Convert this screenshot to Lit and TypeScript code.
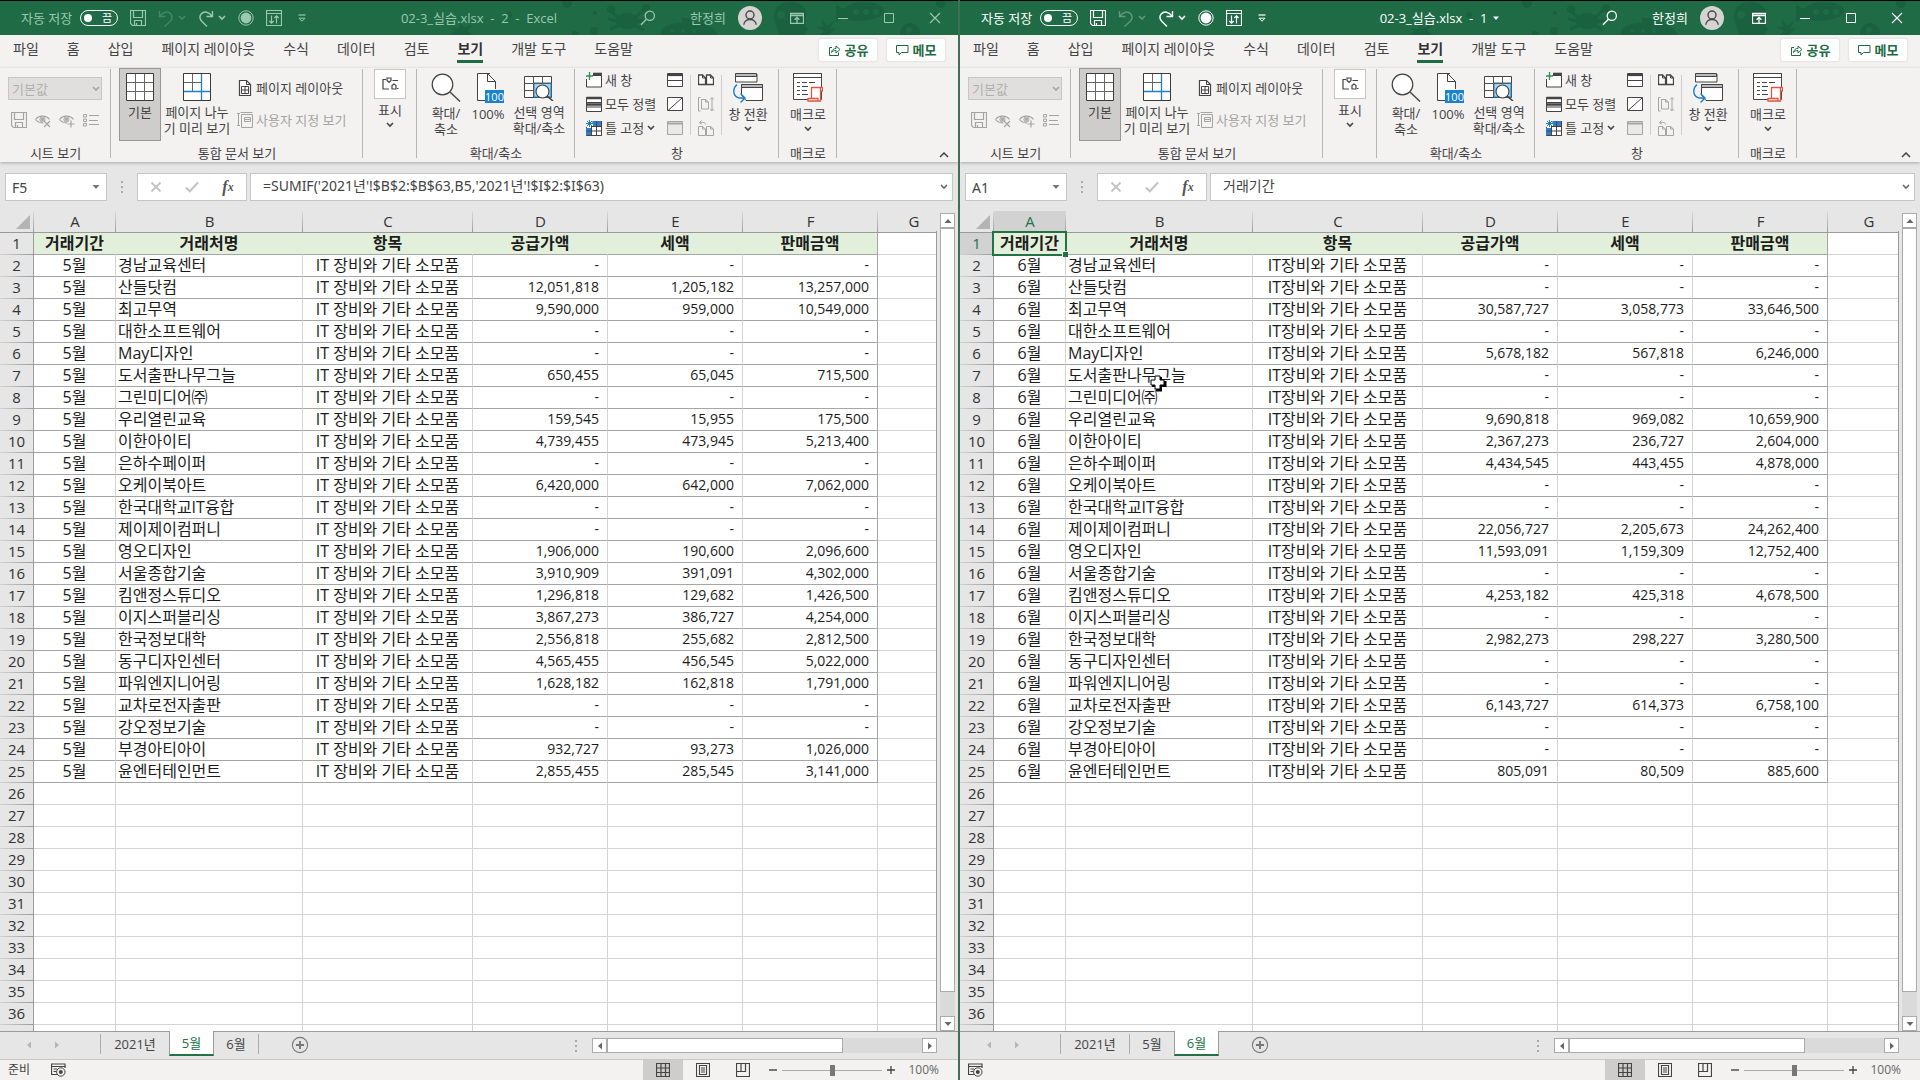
import { LitElement, html, svg, css, nothing } from "lit";
import { customElement, property } from "lit/decorators.js";
import { classMap } from "lit/directives/class-map.js";

interface Book {
  id: string;
  title: string;
  active: boolean;
  cell: string;
  formula: string;
  month: string;
  item: string;
  sheet: string;
  status: string;
  periodWidth: number;
  rows: string[][];
}

const CLIENTS = [
  "경남교육센터", "산들닷컴", "최고무역", "대한소프트웨어", "May디자인", "도서출판나무그늘",
  "그린미디어㈜", "우리열린교육", "이한아이티", "은하수페이퍼", "오케이북아트", "한국대학교IT융합",
  "제이제이컴퍼니", "영오디자인", "서울종합기술", "킴앤정스튜디오", "이지스퍼블리싱", "한국정보대학",
  "동구디자인센터", "파워엔지니어링", "교차로전자출판", "강오정보기술", "부경아티아이", "윤엔터테인먼트",
];

const NONE = ["-", "-", "-"];

const MAY: string[][] = [
  NONE,
  ["12,051,818", "1,205,182", "13,257,000"],
  ["9,590,000", "959,000", "10,549,000"],
  NONE,
  NONE,
  ["650,455", "65,045", "715,500"],
  NONE,
  ["159,545", "15,955", "175,500"],
  ["4,739,455", "473,945", "5,213,400"],
  NONE,
  ["6,420,000", "642,000", "7,062,000"],
  NONE,
  NONE,
  ["1,906,000", "190,600", "2,096,600"],
  ["3,910,909", "391,091", "4,302,000"],
  ["1,296,818", "129,682", "1,426,500"],
  ["3,867,273", "386,727", "4,254,000"],
  ["2,556,818", "255,682", "2,812,500"],
  ["4,565,455", "456,545", "5,022,000"],
  ["1,628,182", "162,818", "1,791,000"],
  NONE,
  NONE,
  ["932,727", "93,273", "1,026,000"],
  ["2,855,455", "285,545", "3,141,000"],
];

const JUNE: string[][] = [
  NONE,
  NONE,
  ["30,587,727", "3,058,773", "33,646,500"],
  NONE,
  ["5,678,182", "567,818", "6,246,000"],
  NONE,
  NONE,
  ["9,690,818", "969,082", "10,659,900"],
  ["2,367,273", "236,727", "2,604,000"],
  ["4,434,545", "443,455", "4,878,000"],
  NONE,
  NONE,
  ["22,056,727", "2,205,673", "24,262,400"],
  ["11,593,091", "1,159,309", "12,752,400"],
  NONE,
  ["4,253,182", "425,318", "4,678,500"],
  NONE,
  ["2,982,273", "298,227", "3,280,500"],
  NONE,
  NONE,
  ["6,143,727", "614,373", "6,758,100"],
  NONE,
  NONE,
  ["805,091", "80,509", "885,600"],
];

const BOOKS: Book[] = [
  {
    id: "may", title: "02-3_실습.xlsx \u00a0-\u00a0 2 \u00a0-\u00a0 Excel", active: false, cell: "F5",
    formula: "=SUMIF('2021년'!$B$2:$B$63,B5,'2021년'!$I$2:$I$63)", month: "5월",
    item: "IT 장비와 기타 소모품", sheet: "5월", status: "준비", periodWidth: 82, rows: MAY,
  },
  {
    id: "june", title: "02-3_실습.xlsx \u00a0-\u00a0 1", active: true, cell: "A1",
    formula: "거래기간", month: "6월",
    item: "IT장비와 기타 소모품", sheet: "6월", status: "", periodWidth: 72, rows: JUNE,
  },
];

const TABS = ["파일", "홈", "삽입", "페이지 레이아웃", "수식", "데이터", "검토", "보기", "개발 도구", "도움말"];
const HEADERS = ["거래기간", "거래처명", "항목", "공급가액", "세액", "판매금액"];
const LETTERS = ["A", "B", "C", "D", "E", "F", "G"];
const SHEETS = ["2021년", "5월", "6월"];

const icon = (w: number, h: number, body: unknown) => html`
  <svg width=${w} height=${h} viewBox="0 0 ${w} ${h}" fill="none" stroke="currentColor" stroke-width="1" aria-hidden="true">${body}</svg>`;

const chevron = () => icon(8, 6, svg`<path d="M1 1 L4 4 L7 1" stroke-width="1.6"/>`);
const saveIcon = () => icon(16, 16, svg`<path d="M.5 .5H15.5V15.5H2.5L.5 13.5Z M3.5 .5V7.5H12.5V.5 M4.5 15.5V10.5H11.5V15.5 M6.5 13V15.5" stroke-width="1.2"/>`);
const undoIcon = () => icon(16, 17, svg`<path d="M1.5 1V6.5H7.5 M1.8 6.3C5 1.5 10 1 12.6 3.8C15 6.6 14 9.5 12 11.5L6.5 16.5" stroke-width="1.4"/>`);
const redoIcon = () => icon(16, 17, svg`<path d="M14.5 1V6.5H8.5 M14.2 6.3C11 1.5 6 1 3.4 3.8C1 6.6 2 9.5 4 11.5L9 16.5" stroke-width="1.4"/>`);
const recordIcon = () => icon(16, 16, svg`<circle cx="8" cy="8" r="7.2"/><circle cx="8" cy="8" r="5.4" fill="currentColor" stroke="none"/>`);
const sortIcon = () => icon(16, 16, svg`<path d="M.5 .5H15.5V15.5H.5Z M.5 3.5H15.5 M5.5 5.5V13 M3.3 11L5.5 13.2L7.7 11 M10.5 13.5V6 M8.3 8L10.5 5.8L12.7 8" stroke-width="1.2"/>`);
const moreIcon = () => icon(16, 10, svg`<path d="M4.500 2H11.500" stroke-width="1.2"/><path d="M5 5.2H11L8 8.2Z"/>`);
const searchIcon = () => icon(16, 16, svg`<circle cx="9.8" cy="5.8" r="4.6" stroke-width="1.3"/><path d="M6.4 9.2L1 14.8" stroke-width="1.4"/>`);
const avatar = () => icon(24, 24, svg`<circle cx="12" cy="12" r="12" fill="#d6d4d3" stroke="none"/><circle cx="12" cy="9" r="4" stroke="#494949" stroke-width="1.4"/><path d="M5.8 18.8C6.4 11.8 17.6 11.8 18.2 18.8" stroke="#494949" stroke-width="1.4"/>`);
const displayIcon = () => icon(14, 12, svg`<path d="M.5 1.5H13.5V11.5H.5Z M.5 3.5H13.5 M7 11.5V5.5 M4.6 7.8L7 5.4L9.4 7.8" stroke-width="1.3"/>`);
const minIcon = () => icon(10, 10, svg`<path d="M0 5.5H10"/>`);
const maxIcon = () => icon(10, 10, svg`<path d="M.5 .5H9.5V9.5H.5Z"/>`);
const closeIcon = () => icon(12, 12, svg`<path d="M1 1L11 11M11 1L1 11" stroke-width="1.1"/>`);
const shareIcon = () => icon(13, 13, svg`<path d="M4 3.5H1.5V11.5H10.5V8.5 M3.5 8.5C4 5.5 6 4.5 8 4.5V2L12 5.5L8 9V6.5C6 6.5 4.5 7 3.5 8.5Z"/>`);
const noteIcon = () => icon(13, 12, svg`<path d="M.5 1.5H12V8.5H5.5L3 11V8.5H.5Z"/>`);

const eye = svg`<path d="M.5 7.5C3.5 3 11.5 3 14.5 7.5 M.5 7.5C2.5 10 5 11 8 10.8" stroke-width="1.2"/><circle cx="7.5" cy="7.5" r="2.6"/><circle cx="7.5" cy="7.5" r="1.2" fill="currentColor"/>`;
const eyeX = () => icon(16, 16, svg`${eye}<path d="M9 9L15 15M15 9L9 15" stroke-width="1.2"/>`);
const eyePlus = () => icon(16, 16, svg`${eye}<path d="M12 8.5V15.5M8.5 12H15.5" stroke-width="1.2"/>`);
const listIcon = () => icon(16, 14, svg`<path d="M.5 1.5H3.5V4H.5Z M.5 6H3.5V8.5H.5Z M.5 10.5H3.5V13H.5Z M6 2.5H16 M6 7.5H15 M6 11.5H16"/>`);

const normalIcon = () => icon(28, 28, svg`<path d="M1 1H27V27H1Z" fill="#fff" stroke="none"/><path d="M9.5 1V27M18.5 1V27M1 9.5H27M1 18.5H27" stroke="#666"/><path d="M.5 .5H27.5V27.5H.5Z" stroke="#3b3b3b"/>`);
const breakIcon = () => icon(28, 28, svg`<path d="M1 1H27V27H1Z" fill="#fff" stroke="none"/><path d="M9.5 1V18M1 9.5H18" stroke="#666"/><path d="M.5 .5H27.5V27.5H.5Z" stroke="#3b3b3b"/><path d="M18.5 1V27M1 18.5H27" stroke="#1e7fc8" stroke-width="1.3"/>`);
const layoutIcon = () => icon(16, 18, svg`<path d="M2.5 1.5H9.5L13.5 5.5V16.5H2.5Z" fill="#fff" stroke-width="1.2"/><path d="M9.5 1.5V5.5H13.5 M4.5 7.5H11.5V14.5H4.5Z M8 7.5V14.5 M4.5 11H11.5"/>`);
const customIcon = () => icon(16, 18, svg`<path d="M0 2.5H3M0 14.5H3M1.5 2.5V14.5 M3.5 1.5H15.5 M4.5 3.5H15.5V16.5H4.5Z M7.5 6.5H13.5V10.5H7.5Z M7.5 8.5H13.5"/>`);
const showIcon = () => icon(18, 14, svg`<path d="M5 2.5H2V12H8" stroke-width="1.2"/><path d="M6 1H10V3.5L8 5.5L6 3.5Z M11.5 3.5H17 M11 8.5L13 7L15 8.5V12H11Z M16 11.5H17.5" stroke-width="1.2"/>`);
const zoomIcon = () => icon(30, 29, svg`<circle cx="11.5" cy="11.5" r="10.3" fill="#fff" stroke-width="1.2"/><path d="M19 19L29 28.5" stroke-width="1.4"/>`);
const hundredIcon = () => icon(34, 30, svg`<path d="M6.5 .5H16.5L24.5 8.5V27.5H6.5Z" fill="#fff" stroke="none"/><path d="M19 .5H6.5V27.5H15 M16.5 .5V8.5H24.5V16 M16.5 .5L24.5 8.5"/><path d="M14 17H33V30H14Z" fill="#1a82cf" stroke="none"/><text class="badge" x="23.5" y="27.5" text-anchor="middle">100</text>`);
const areaIcon = () => icon(30, 28, svg`<path d="M.5 3.5H27.5V24.5H.5Z" fill="#fff"/><path d="M10 10H27V24H10Z" fill="#a9d3f5" stroke="#1a82cf"/><path d="M9.5 3.5V24.5M18.5 3.5V10M1 10.5H27M1 17.5H10" stroke="#555"/><circle cx="18.5" cy="18.5" r="6.5" fill="#fff" stroke-width="1.2"/><path d="M23.2 23.2L29 28" stroke-width="1.5"/>`);
const newWinIcon = () => icon(16, 16, svg`<path d="M6 3.5H15.5V15H.5V7" fill="#fff"/><path d="M7 2H16" stroke-width="2.6"/><path d="M3.5 0V8M0 4H7" stroke="#2f8f55" stroke-width="1.3"/>`);
const arrangeIcon = () => icon(16, 16, svg`<path d="M.5 1.5H15.5V15.5H.5Z" fill="#fff"/><path d="M.5 2H15.5M.5 8.5H15.5" stroke-width="2.4"/><path d="M.5 6.5H15.5M.5 11H15.5"/>`);
const freezeIcon = () => icon(16, 16, svg`<path d="M6 2H15.5V15.5H.5V7" fill="#fff"/><path d="M7 1H16V6H7Z M0 8H5V16H0Z" fill="#2f80c5" stroke="none"/><path d="M5.500 7V15.5M10.5 1V15.5M5 6.5H15.5M.5 11H15.5M.5 15.5H15.5V1"/><path d="M3.5 0V7M0 3.5H7M1 1L6 6M6 1L1 6" stroke="#1e7fc8"/>`);
const splitIcon = () => icon(16, 15, svg`<path d="M.5 .5H15.5V13.5H.5Z" fill="#fff"/><path d="M.5 2H15.5" stroke-width="2.2"/><path d="M.5 7.5H15.5"/>`);
const hideIcon = () => icon(16, 15, svg`<path d="M.5 .5H15.5V13.5H.5Z" fill="#fff"/><path d="M1 13.5L15.5 .5"/>`);
const unhideIcon = () => icon(16, 15, svg`<path d="M.5 .5H15.5V13.5H.5Z" fill="#e9e9e9"/><path d="M.5 2.5H15.5" stroke-width="2"/>`);
const sideIcon = () => icon(16, 14, svg`<path d="M.5 2H4.5L7.5 5V11.5H.5Z M8.5 2H12.5L15.5 5V11.5H8.5Z" fill="#fff" stroke-width="1.3"/><path d="M4.5 2V5H7.5M12.5 2V5H15.5"/>`);
const syncIcon = () => icon(16, 15, svg`<path d="M2.5 .5H.5V14H2.5 M3.5 2.5H7.5L10.5 5V12H3.5Z M7.5 2.5V5H10.5 M14 .5V14 M12.2 2.5L14 .7L15.8 2.5 M12.2 12L14 13.8L15.8 12"/>`);
const resetIcon = () => icon(16, 16, svg`<path d="M.5 6.5H4.5L7.5 9V15.5H.5Z M8.5 6.5H12.5L15.5 9V15.5H8.5Z M4.5 6.5V9H7.5M12.5 6.5V9H15.5 M7.5 4.5C7.5 2.5 5 2 1.5 2.5 M3.5 .5L1.3 2.6L3.8 4.2"/>`);
const switchIcon = () => icon(30, 30, svg`<path d="M2.5 1V9H24V1" fill="#fff"/><path d="M2.5 .5H23.5V3.5H2.5Z" fill="#b9b9b9"/><path d="M8.5 11.5H29.5V27.5H13L8.5 22Z" fill="#fff"/><path d="M8.5 11.5H29.5V14.5H8.5Z" fill="#b9b9b9"/><path d="M4 11.5C-1 16 0 23.5 6 25H11.5 M7.5 20.5L12 25L7.5 29.5" stroke="#1e7fc8" stroke-width="1.4"/>`);
const macroIcon = () => icon(30, 30, svg`<path d="M.5 .5H28.5V26.5H.5Z" fill="#fff"/><path d="M.5 .5H28.5V4.5H.5Z"/><path d="M4 9.5H7M9 9.5H14M16 9.5H22M4 13.5H7M9 13.5H15M4 17.5H7M9 17.5H14M4 21.5H7M9 21.5H15"/><path d="M18.5 14.5H29C30 14.5 30 18 29 18H27.5V28H15V25.5H18.5Z M27.5 14.5V18 M15 25.5H25V28" fill="#fff" stroke="#e8523f" stroke-width="1.3"/>`);
const macroStatus = () => icon(15, 14, svg`<path d="M7 11.5H.5V1H14V5 M.5 3.5H14 M2.5 6H6M2.5 8.5H5" stroke-width="1.2"/><circle cx="9.8" cy="9" r="4.2"/><circle cx="9.8" cy="9" r="2" fill="currentColor" stroke="none"/>`);
const triangle = (points: string) => html`<svg width="8" height="8" viewBox="0 0 8 8" aria-hidden="true"><polygon points=${points} fill="currentColor" /></svg>`;
const UP = "0.5,6 4,2 7.5,6";
const DOWN = "0.5,2 7.5,2 4,6";
const LEFT = "6,0.5 6,7.5 2,4";
const RIGHT = "2,0.5 6,4 2,7.5";

@customElement("excel-window")
export class ExcelWindow extends LitElement {
  @property({ attribute: false }) book!: Book;

  static styles = css`
    :host {
      display: flex;
      flex-direction: column;
      min-width: 0;
      height: 100%;
      background: #e6e6e6;
      color: #444;
      font: 13px/16px "Open Sans", "Noto Sans CJK KR", sans-serif;
      overflow: hidden;
    }
    * { box-sizing: border-box; }
    button, input, select { font: inherit; color: inherit; margin: 0; border-radius: 0; }
    button { display: flex; align-items: center; justify-content: center; padding: 0; border: 0; background: none; }
    svg { display: block; flex: none; }

    .title { position: relative; display: grid; grid-template-columns: 1fr auto 1fr; align-items: center; height: 35px; border-top: 1px solid #000; background: #1e6b45; color: #9cc8b0; }
    .title.on { color: #fff; }
    .art { position: absolute; left: 0; top: 0; color: #1a6140; }
    .quick, .account { position: relative; display: flex; align-items: center; }
    .quick { gap: 12px; padding-left: 21px; }
    .auto { display: flex; align-items: center; gap: 8px; }
    .toggle { width: 38px; height: 16px; justify-content: space-between; padding: 0 5px 0 3px; border: 1px solid #fff; border-radius: 8px; color: #fff; font-size: 11px; line-height: 14px; }
    .knob { width: 8px; height: 8px; border-radius: 50%; background: #fff; }
    .split { gap: 4px; }
    .dim { opacity: .3; }
    .name { position: relative; display: flex; align-items: center; gap: 5px; white-space: pre; }
    .account { justify-content: flex-end; }
    .user { gap: 12px; margin: 0 12px 0 34px; color: inherit; }
    .frame { width: 46px; height: 34px; }

    .tabs { display: flex; height: 33px; padding: 0 13px; background: #f3f2f1; }
    .tablist { display: flex; align-self: flex-start; gap: 28px; font-size: 14px; line-height: 20px; }
    .tablist a { padding: 4px 0 1px; border-bottom: 3px solid transparent; color: #444; text-decoration: none; }
    .tablist a.on { border-color: #1e6b45; font-weight: 700; color: #333; }
    .share { display: flex; gap: 10px; margin: 4px 0 0 auto; }
    .share button { gap: 4px; width: 58px; height: 22px; border-radius: 2px; background: #fff; box-shadow: 0 0 2px #c4c4c4; color: #1e6b45; font-weight: 700; }

    .ribbon { position: relative; display: flex; height: 94px; background: #f3f2f1; box-shadow: 0 1px 3px #a9a9a9; }
    .group { display: flex; flex-direction: column; background: linear-gradient(#b8b6b4, #b8b6b4) right top 1px / 1px 89px no-repeat; }
    .body { display: flex; height: 76px; }
    .label { line-height: 18px; text-align: center; }
    .g-sheet { width: 111px; }
    .g-book { width: 252px; }
    .g-show { width: 54px; }
    .g-zoom { width: 158px; }
    .g-window { width: 204px; }
    .g-macro { width: 58px; }
    .g-sheet .body { flex-direction: column; gap: 12px; padding: 9px 9px 0 8px; color: #a6a4a2; }
    .g-book .body { gap: 1px; padding-left: 8px; }
    .g-show .body, .g-macro .body { justify-content: center; }
    .g-zoom .body { gap: 4px; padding-left: 10px; }
    .g-window .body { gap: 7px; padding-left: 11px; }
    .combo { display: grid; height: 23px; align-items: center; }
    .combo > * { grid-area: 1 / 1; }
    .combo select { width: 100%; height: 23px; padding: 0 3px; appearance: none; border: 1px solid #c8c6c4; background: #e1dfdd; color: #b1afad; opacity: 1; }
    .combo svg { justify-self: end; margin-right: 2px; }
    .minis { display: flex; align-items: center; gap: 8px; padding-left: 3px; }
    .big { flex-direction: column; justify-content: flex-start; gap: 3px; height: 73px; padding-top: 4px; border: 1px solid transparent; text-align: center; }
    .big span { white-space: pre; }
    .big .drop { display: flex; height: 8px; align-items: center; }
    .w42 { width: 42px; }
    .w38 { width: 38px; }
    .w56 { width: 56px; }
    .w70 { width: 70px; }
    .pressed { border-color: #979593; background: #cfcdcb; }
    .pair { display: flex; flex-direction: column; gap: 8px; padding: 8px 0 0 4px; }
    .small { justify-content: flex-start; gap: 3px; height: 24px; white-space: nowrap; }
    .off { color: #a6a4a2; }
    .show { padding-top: 0; }
    .tile { display: flex; align-items: center; justify-content: center; width: 32px; height: 30px; border: 1px solid #c8c6c4; background: #fff; }
    .col { display: flex; flex-direction: column; }
    .col.wide { width: 74px; }
    .bar { width: 1px; height: 60px; margin-top: 7px; background: #d0cecc; }
    .badge { fill: #fff; stroke: none; font: 11px "Open Sans", sans-serif; }
    .fold { align-self: flex-end; width: 28px; height: 14px; margin-left: auto; }

    .entry { display: flex; height: 49px; padding: 11px 5px 10px; font: 14px/16px "Noto Sans", "Noto Sans CJK KR", sans-serif; }
    .cellbox { display: flex; width: 102px; align-items: center; border: 1px solid #c6c6c6; background: #fff; }
    .cellbox input { flex: 1; min-width: 0; height: 26px; padding: 0 6px; border: 0; background: none; }
    .cellbox button { width: 20px; height: 26px; color: #777; }
    .dots { display: flex; flex-direction: column; align-items: center; justify-content: center; gap: 3px; width: 30px; }
    .dots i { width: 2px; height: 2px; background: #a9a9a9; }
    .acts { display: flex; width: 110px; margin-right: 3px; border: 1px solid #c6c6c6; background: #fff; color: #c2c2c2; }
    .acts button { flex: 1; }
    .fx { color: #555; font: italic 700 16px/20px "Liberation Serif", serif; }
    .fx small { font-size: 12px; }
    .formula { display: flex; flex: 1; min-width: 0; border: 1px solid #c6c6c6; background: #fff; }
    .formula input { flex: 1; min-width: 0; padding: 0 12px 2px; border: 0; background: none; }
    .formula button { width: 16px; color: #666; }

    .work { display: flex; flex: 1 1 0; min-height: 0; }
    .sheet { flex: 1; min-width: 0; overflow: hidden; border-right: 1px solid; border-image: linear-gradient(#e6e6e6 21px, #9b9b9b 21px) 1; background: #fff; }
    table { width: 100%; min-width: 950px; table-layout: fixed; border-collapse: separate; border-spacing: 0; color: #1c1c1c; font-size: 16px; line-height: 21px; }
    col.no { width: 34px; }
    col.client { width: 187px; }
    col.item { width: 170px; }
    col.sum { width: 135px; }
    th, td { height: 22px; padding: 0; border-right: 1px solid #d4d4d4; border-bottom: 1px solid #d4d4d4; font-weight: 400; white-space: nowrap; text-align: center; }
    thead th { border-right: 0; border-bottom-color: #9b9b9b; background: linear-gradient(#dcdcdc, #9b9b9b) right / 1px 100% no-repeat #e6e6e6; color: #333; font-size: 15px; }
    tbody th { padding-bottom: 2px; border-right-color: #9b9b9b; border-bottom: 0; background: linear-gradient(90deg, #d2d2d2, #9b9b9b) bottom / 100% 1px no-repeat #e6e6e6; color: #333; font-size: 15px; line-height: 20px; }
    th.sel { background-color: #d2d2d2; color: #217346; }
    .corner svg { margin-left: 16px; }
    .data td { border-bottom-color: #a6a6a6; }
    .data td.f { border-right-color: #a6a6a6; }
    .data td.g { border-bottom-color: #d4d4d4; }
    .head td { border-right-color: #e2efda; background: #e2efda; font-weight: 700; }
    .head td.g { border-right-color: #d4d4d4; background: #fff; }
    td.b { padding-left: 2px; text-align: left; }
    .head td.b { padding: 0; text-align: center; }
    .data td.num { padding: 0 8px 2px 0; text-align: right; font-size: 14px; line-height: 19px; }
    td.pick { position: relative; }
    .ring { position: absolute; inset: -2px; border: 2px solid #217346; }
    .ring::after { content: ""; position: absolute; right: -3px; bottom: -3px; width: 5px; height: 5px; border: solid #fff; border-width: 1px 0 0 1px; background: #217346; }

    .vbar { display: flex; flex-direction: column; width: 15px; margin: 2px 3px 0; background: #dadada; }
    .vbar button, .hbar button { flex: none; width: 15px; height: 15px; border: 1px solid #ababab; background: #fff; color: #666; }
    .vtrack { flex: 1; }
    .vthumb { height: 97%; border: 1px solid #ababab; background: #fff; }

    .bottom { display: flex; height: 28px; border-top: 1px solid #9b9b9b; }
    .nav { display: flex; align-items: center; gap: 20px; width: 100px; padding: 0 0 2px 25px; color: #b5b5b5; }
    .nav button { width: 8px; height: 8px; }
    .names { display: flex; }
    .names button { width: 45px; height: 20px; margin-top: 2px; border-left: 1px solid #ababab; color: #444; }
    .names button:first-child { width: 69px; }
    .names button:last-child { border-right: 1px solid #ababab; }
    .names button.on { height: 25px; margin-top: -1px; border: solid #9b9b9b; border-width: 0 1px; border-bottom: 2px solid #217346; background: #fff; color: #217346; }
    .names button.on + button { border-left: 0; }
    .add { width: 18px; height: 18px; margin: 4px 0 0 32px; color: #777; }
    .grow { flex: 1; }
    .bottom .dots { width: 32px; }
    .hbar { display: flex; width: 345px; height: 15px; margin: 6px 21px 0 0; background: #dadada; }
    .htrack { flex: 1; }
    .hthumb { width: 75%; height: 15px; border: 1px solid #ababab; background: #fff; }

    .status { display: flex; height: 21px; align-items: center; padding: 0 19px 0 8px; border-top: 1px solid #c8c8c4; background: #f3f2f1; font-size: 12px; }
    .ready { width: 43px; }
    .view { width: 40px; height: 20px; }
    .view.on { background: #cfcdcb; }
    .step { width: 8px; height: 20px; margin-left: 6px; }
    .step.plus { margin-left: 5px; }
    .pct { min-width: 30px; margin-left: 13px; color: #666; }
    .range { appearance: none; width: 100px; height: 11px; margin-left: 5px; background: linear-gradient(#ababab, #ababab) center / 100% 1px no-repeat; }
    .range::-webkit-slider-thumb { appearance: none; width: 5px; height: 11px; background: #777; }
  `;

  private art() {
    return html`<svg class="art" width="958" height="34" viewBox="0 0 958 34" fill="currentColor" aria-hidden="true">
      <circle cx="567" cy="2" r="5" /><circle cx="595" cy="12" r="2" /><circle cx="509" cy="14" r="3" /><circle cx="594" cy="30" r="4" />
      <circle cx="575" cy="33" r="3" /><circle cx="702" cy="20" r="2" /><circle cx="941" cy="2" r="5" /><circle cx="935" cy="13" r="2" />
      <path d="M461 22L464 27L472 24L467 30L474 34H450L455 30L450 27L458 28Z" />
      <ellipse cx="627" cy="20" rx="11" ry="8" />
      <path d="M610 10L618 16M608 18L618 20M610 28L620 24M644 8L636 16M648 20L637 20M644 29L634 24" stroke="currentColor" stroke-width="3" />
      <circle cx="611" cy="8" r="4" /><circle cx="646" cy="7" r="4" />
      <path d="M661 34C660 25 672 22 682 22V17H694V22C708 22 716 27 717 34Z" />
      <path d="M774 16C772 -4 808 -4 806 14C806 22 803 25 808 28L804 34H778C780 26 774 24 774 16Z" />
      <path d="M822 18L827 25L834 20L830 28L836 27L829 34H820L824 30L816 26L823 26Z" />
      <path d="M836 4L844 8C852 -2 880 -1 884 9C886 18 856 24 844 17L836 21Z" />
      <circle cx="910" cy="32" r="10" />
      <g fill="#1e6b45"><circle cx="781" cy="14" r="4" /><circle cx="856" cy="11" r="3" /><circle cx="866" cy="11" r="3" /><circle cx="876" cy="11" r="3" /><circle cx="909" cy="29" r="3" /><circle cx="672" cy="30" r="2" /><circle cx="683" cy="30" r="2" /><circle cx="694" cy="30" r="2" /></g>
    </svg>`;
  }

  private titleBar() {
    const b = this.book;
    return html`<header class=${classMap({ title: true, on: b.active })}>
      ${this.art()}
      <div class="quick">
        <span class="auto">자동 저장
          <button class="toggle" role="switch" aria-checked="false" aria-label="자동 저장"><i class="knob"></i>끔</button>
        </span>
        <button aria-label="저장">${saveIcon()}</button>
        <button class="split dim" aria-label="실행 취소">${undoIcon()}${chevron()}</button>
        <button class="split" aria-label="다시 실행">${redoIcon()}${chevron()}</button>
        <button aria-label="기록">${recordIcon()}</button>
        <button aria-label="정렬">${sortIcon()}</button>
        <button aria-label="빠른 실행 도구 모음">${moreIcon()}</button>
      </div>
      <div class="name">${b.title}${b.active ? triangle("1,2.5 7,2.5 4,6") : nothing}</div>
      <div class="account">
        <button aria-label="검색">${searchIcon()}</button>
        <button class="user">한정희${avatar()}</button>
        <button class="frame" aria-label="리본 표시">${displayIcon()}</button>
        <button class="frame" aria-label="최소화">${minIcon()}</button>
        <button class="frame" aria-label="최대화">${maxIcon()}</button>
        <button class="frame" aria-label="닫기">${closeIcon()}</button>
      </div>
    </header>`;
  }

  private tabBar() {
    return html`<div class="tabs">
      <nav class="tablist">${TABS.map((t) => html`<a href="#" class=${classMap({ on: t === "보기" })}>${t}</a>`)}</nav>
      <div class="share"><button>${shareIcon()}공유</button><button>${noteIcon()}메모</button></div>
    </div>`;
  }

  private ribbon() {
    return html`<section class="ribbon">
      <div class="group g-sheet">
        <div class="body">
          <div class="combo"><select disabled aria-label="시트 보기"><option>기본값</option></select>${chevron()}</div>
          <div class="minis">
            <button aria-label="유지" disabled class="off">${saveIcon()}</button><button aria-label="끝내기" disabled class="off">${eyeX()}</button>
            <button aria-label="새로 만들기" disabled class="off">${eyePlus()}</button><button aria-label="옵션" disabled class="off">${listIcon()}</button>
          </div>
        </div>
        <div class="label">시트 보기</div>
      </div>
      <div class="group g-book">
        <div class="body">
          <button class="big w42 pressed" aria-pressed="true">${normalIcon()}<span>기본</span></button>
          <button class="big w70">${breakIcon()}<span>${"페이지 나누\n기 미리 보기"}</span></button>
          <div class="pair">
            <button class="small">${layoutIcon()}페이지 레이아웃</button>
            <button class="small off" disabled>${customIcon()}사용자 지정 보기</button>
          </div>
        </div>
        <div class="label">통합 문서 보기</div>
      </div>
      <div class="group g-show">
        <div class="body"><button class="big show"><i class="tile">${showIcon()}</i><span>표시</span><span class="drop">${chevron()}</span></button></div>
      </div>
      <div class="group g-zoom">
        <div class="body">
          <button class="big w38">${zoomIcon()}<span>${"확대/\n축소"}</span></button>
          <button class="big w38">${hundredIcon()}<span>100%</span></button>
          <button class="big w56">${areaIcon()}<span>${"선택 영역\n확대/축소"}</span></button>
        </div>
        <div class="label">확대/축소</div>
      </div>
      <div class="group g-window">
        <div class="body">
          <div class="col wide">
            <button class="small">${newWinIcon()}새 창</button>
            <button class="small">${arrangeIcon()}모두 정렬</button>
            <button class="small">${freezeIcon()}틀 고정 ${chevron()}</button>
          </div>
          <div class="col">
            <button class="small" aria-label="나누기">${splitIcon()}</button>
            <button class="small" aria-label="숨기기">${hideIcon()}</button>
            <button class="small off" aria-label="숨기기 취소" disabled>${unhideIcon()}</button>
          </div>
          <i class="bar"></i>
          <div class="col">
            <button class="small" aria-label="나란히 보기">${sideIcon()}</button>
            <button class="small off" aria-label="동시 스크롤" disabled>${syncIcon()}</button>
            <button class="small off" aria-label="창 위치 다시 정렬" disabled>${resetIcon()}</button>
          </div>
          <i class="bar"></i>
          <button class="big w38">${switchIcon()}<span>창 전환</span><span class="drop">${chevron()}</span></button>
        </div>
        <div class="label">창</div>
      </div>
      <div class="group g-macro">
        <div class="body"><button class="big w42">${macroIcon()}<span>매크로</span><span class="drop">${chevron()}</span></button></div>
        <div class="label">매크로</div>
      </div>
      <button class="fold" aria-label="리본 축소">${icon(10, 6, svg`<path d="M1 5L5 1L9 5" stroke-width="1.5"/>`)}</button>
    </section>`;
  }

  private entryBar() {
    const b = this.book;
    return html`<div class="entry">
      <div class="cellbox"><input aria-label="이름 상자" .value=${b.cell} /><button aria-label="이름 목록">${triangle("0.5,2 7.5,2 4,6")}</button></div>
      <div class="dots"><i></i><i></i><i></i></div>
      <div class="acts">
        <button aria-label="취소">${icon(12, 12, svg`<path d="M1.5 1.5L10.5 10.5M10.5 1.5L1.5 10.5" stroke-width="1.8"/>`)}</button>
        <button aria-label="입력">${icon(14, 12, svg`<path d="M1 6.5L4.8 10.2L13 1.5" stroke-width="2"/>`)}</button>
        <button class="fx" aria-label="함수 삽입">f<small>x</small></button>
      </div>
      <div class="formula"><input aria-label="수식 입력줄" .value=${b.formula} /><button aria-label="수식 입력줄 확장">${chevron()}</button></div>
    </div>`;
  }

  private bodyRow(n: number) {
    const b = this.book;
    const pick = b.cell === "A1" && n === 1;
    const no = html`<th scope="row" class=${classMap({ sel: pick })}>${n}</th>`;
    if (n === 1) {
      return html`<tr class="data head">${no}${HEADERS.map((h, i) => html`<td class=${classMap({ pick: pick && i === 0, b: i === 1, f: i === 5 })}>${h}${pick && i === 0 ? html`<span class="ring"></span>` : nothing}</td>`)}<td class="g"></td></tr>`;
    }
    const row = b.rows[n - 2];
    if (!row) return html`<tr>${no}${LETTERS.map(() => html`<td></td>`)}</tr>`;
    return html`<tr class="data">${no}<td>${b.month}</td><td class="b">${CLIENTS[n - 2]}</td><td>${b.item}</td>
      ${row.map((v, i) => html`<td class=${classMap({ num: true, f: i === 2 })}>${v}</td>`)}<td class="g"></td></tr>`;
  }

  private grid() {
    const b = this.book;
    return html`<div class="work">
      <div class="sheet">
        <table aria-label=${b.sheet}>
          <colgroup>
            <col class="no" /><col style="width:${b.periodWidth}px" /><col class="client" /><col class="item" />
            <col class="sum" /><col class="sum" /><col class="sum" /><col />
          </colgroup>
          <thead><tr>
            <th class="corner" aria-label="모두 선택">${icon(14, 14, svg`<path d="M14 0V14H0Z" fill="#b4b4b4" stroke="none"/>`)}</th>
            ${LETTERS.map((l, i) => html`<th scope="col" class=${classMap({ sel: b.cell === "A1" && i === 0 })}>${l}</th>`)}
          </tr></thead>
          <tbody>${Array.from({ length: 37 }, (_, i) => this.bodyRow(i + 1))}</tbody>
        </table>
      </div>
      <div class="vbar">
        <button aria-label="위로">${triangle(UP)}</button>
        <div class="vtrack"><div class="vthumb"></div></div>
        <button aria-label="아래로">${triangle(DOWN)}</button>
      </div>
    </div>`;
  }

  private footer() {
    const b = this.book;
    return html`<div class="bottom">
        <div class="nav"><button aria-label="이전 시트">${triangle(LEFT)}</button><button aria-label="다음 시트">${triangle(RIGHT)}</button></div>
        <div class="names">${SHEETS.map((s) => html`<button class=${classMap({ on: s === b.sheet })}>${s}</button>`)}</div>
        <button class="add" aria-label="새 시트">${icon(18, 18, svg`<circle cx="9" cy="9" r="7.6" stroke-width="1.1"/><path d="M9 5V13M5 9H13" stroke-width="1.9"/>`)}</button>
        <div class="grow"></div>
        <div class="dots"><i></i><i></i><i></i></div>
        <div class="hbar">
          <button aria-label="왼쪽으로">${triangle(LEFT)}</button>
          <div class="htrack"><div class="hthumb"></div></div>
          <button aria-label="오른쪽으로">${triangle(RIGHT)}</button>
        </div>
      </div>
      <footer class="status">
        ${b.status ? html`<span class="ready">${b.status}</span>` : nothing}
        ${macroStatus()}
        <div class="grow"></div>
        <button class="view on" aria-label="기본">${icon(14, 14, svg`<path d="M.5 .5H13.5V13.5H.5Z M5 .5V13.5M9.5 .5V13.5M.5 5H13.5M.5 9.5H13.5" stroke-width="1.2"/>`)}</button>
        <button class="view" aria-label="페이지 레이아웃">${icon(14, 14, svg`<path d="M.5 .5H13.5V13.5H.5Z M3.5 2.5H10.5V11.5H3.5Z M5 5H9M5 7H9M5 9H9" stroke-width="1.1"/>`)}</button>
        <button class="view" aria-label="페이지 나누기 미리 보기">${icon(14, 14, svg`<path d="M.5 .5H13.5V13.5H.5Z M5 .5V8.5M9.5 .5V8.5H.5" stroke-width="1.2"/>`)}</button>
        <button class="step" aria-label="축소">${icon(8, 8, svg`<path d="M0 4H8" stroke-width="1.4"/>`)}</button>
        <input class="range" type="range" min="0" max="100" value="50" aria-label="확대/축소" />
        <button class="step plus" aria-label="확대">${icon(8, 8, svg`<path d="M0 4H8M4 0V8" stroke-width="1.3"/>`)}</button>
        <span class="pct">100%</span>
      </footer>`;
  }

  render() {
    return html`${this.titleBar()}${this.tabBar()}${this.ribbon()}${this.entryBar()}${this.grid()}${this.footer()}`;
  }
}

@customElement("app-root")
export class AppRoot extends LitElement {
  static styles = css`
    :host { position: relative; display: grid; grid-template-columns: 1fr 1fr; grid-template-rows: 100vh; overflow: hidden; }
    .pane { min-width: 0; min-height: 0; }
    .pane:first-child { border-right: 2px solid #3f6f59; }
    .pointer { position: absolute; left: 1150px; top: 375px; }
  `;

  render() {
    return html`${BOOKS.map((b) => html`<div class="pane"><excel-window .book=${b}></excel-window></div>`)}
      <svg class="pointer" width="17" height="17" viewBox="0 0 17 17" aria-hidden="true">
        <path d="M6 2H12V6H16.500V12H12V16.500H6V12H2V6H6Z" fill="#000" />
        <path d="M5 1H10V5H14V10H10V14H5V10H1V5H5Z" fill="#fff" stroke="#000" />
      </svg>`;
  }
}
